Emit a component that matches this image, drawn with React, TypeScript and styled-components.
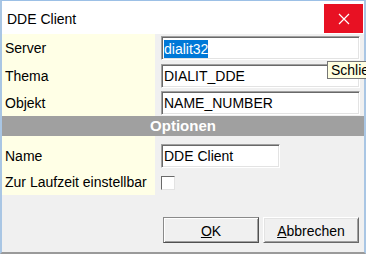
import React from 'react'
import styled, { createGlobalStyle } from 'styled-components'

const GlobalStyle = createGlobalStyle`
  html, body {
    margin: 0;
    padding: 0;
    overflow: hidden;
    background: #ffffff;
  }
  * {
    box-sizing: border-box;
  }
`

const font = `'Liberation Sans', Arial, sans-serif`

type Field = {
  label: string
  value: string
  selected?: boolean
}

const connection: Field[] = [
  { label: 'Server', value: 'dialit32', selected: true },
  { label: 'Thema', value: 'DIALIT_DDE' },
  { label: 'Objekt', value: 'NAME_NUMBER' },
]

export default function App() {
  return (
    <>
      <GlobalStyle />
      <Window>
        <TitleBar>
          <Title>DDE Client</Title>
          <CloseButton aria-label="Schließen">
            <svg width="12" height="12" viewBox="0 0 12 12">
              <path d="M1 1 L11 11 M11 1 L1 11" stroke="#ffffff" strokeWidth="1.2" fill="none" />
            </svg>
          </CloseButton>
        </TitleBar>

        <TopGrid>
          {connection.map((f) => (
            <React.Fragment key={f.label}>
              <Label>{f.label}</Label>
              <FieldCell>
                <TextBox>
                  {f.selected ? <Selection>{f.value}</Selection> : f.value}
                </TextBox>
              </FieldCell>
            </React.Fragment>
          ))}
        </TopGrid>

        <SectionHeader>Optionen</SectionHeader>

        <OptionsGrid>
          <Label>Name</Label>
          <FieldCell>
            <TextBox $width={119}>DDE Client</TextBox>
          </FieldCell>
          <Label>Zur Laufzeit einstellbar</Label>
          <FieldCell>
            <CheckBox />
          </FieldCell>
        </OptionsGrid>

        <ButtonBar>
          <DialogButton $default>
            <u>O</u>K
          </DialogButton>
          <DialogButton>
            <u>A</u>bbrechen
          </DialogButton>
        </ButtonBar>

        <Tooltip>Schließen</Tooltip>
      </Window>
    </>
  )
}

const Window = styled.div`
  position: relative;
  width: 366px;
  height: 254px;
  display: flex;
  flex-direction: column;
  background: #f0f0f0;
  border-top: 1px solid #9cc0e6;
  border-left: 2px solid #a9c6e4;
  border-right: 2px solid #a9c6e4;
  border-bottom: 2px solid #9a9a9a;
  font-family: ${font};
  font-size: 14px;
  color: #000000;
`

const TitleBar = styled.div`
  display: flex;
  justify-content: space-between;
  align-items: flex-start;
  height: 33px;
  background: #ffffff;
`

const Title = styled.div`
  padding: 10px 0 0 5px;
  line-height: 16px;
`

const CloseButton = styled.div`
  display: flex;
  align-items: center;
  justify-content: center;
  width: 39px;
  height: 29px;
  margin: 3px 1px 0 0;
  background: #e81123;
`

const TopGrid = styled.div`
  display: grid;
  grid-template-columns: 153px 1fr;
  grid-template-rows: 28px 27px 27px;
`

const Label = styled.div`
  display: flex;
  align-items: center;
  padding-left: 3px;
  background: #ffffe6;
  white-space: nowrap;
`

const FieldCell = styled.div`
  display: flex;
  align-items: center;
  padding: 0 4px 0 6px;
`

const TextBox = styled.div<{ $width?: number }>`
  display: flex;
  align-items: center;
  width: ${(p) => (p.$width ? `${p.$width}px` : '100%')};
  height: 24px;
  padding: 1px 0 0 2px;
  background: #ffffff;
  border-top: 1px solid #a0a0a0;
  border-left: 1px solid #a0a0a0;
  border-right: 1px solid #ffffff;
  border-bottom: 1px solid #ffffff;
  box-shadow: inset 1px 1px 0 #696969, inset -1px -1px 0 #e3e3e3;
  white-space: nowrap;
`

const Selection = styled.span`
  background: #0078d7;
  color: #ffffff;
  line-height: 18px;
`

const SectionHeader = styled.div`
  height: 20px;
  line-height: 20px;
  text-align: center;
  background: #a0a0a0;
  color: #ffffff;
  font-weight: bold;
  font-size: 15px;
`

const OptionsGrid = styled.div`
  display: grid;
  grid-template-columns: 153px 1fr;
  grid-template-rows: 27px 26px;
  padding-top: 6px;
  background: linear-gradient(to right, #ffffe6 153px, transparent 153px);
`

const CheckBox = styled.div`
  width: 14px;
  height: 14px;
  margin-top: 1px;
  background: #ffffff;
  border-top: 1px solid #696969;
  border-left: 1px solid #696969;
  border-right: 1px solid #e3e3e3;
  border-bottom: 1px solid #e3e3e3;
`

const ButtonBar = styled.div`
  display: flex;
  justify-content: flex-end;
  gap: 4px;
  padding: 22px 5px 0 0;
`

const DialogButton = styled.div<{ $default?: boolean }>`
  display: flex;
  align-items: center;
  justify-content: center;
  width: 96px;
  height: 26px;
  background: #f0f0f0;
  border: 1px solid;
  border-color: ${(p) =>
    p.$default ? '#8a8a8a #505050 #505050 #8a8a8a' : '#ffffff #696969 #696969 #ffffff'};
  box-shadow: ${(p) =>
    p.$default
      ? 'inset 1px 1px 0 #ffffff, inset -1px -1px 0 #a0a0a0'
      : 'inset 1px 1px 0 #e3e3e3, inset -1px -1px 0 #a0a0a0'};
  padding-top: 1px;
`

const Tooltip = styled.div`
  position: absolute;
  left: 325px;
  top: 60px;
  height: 18px;
  padding: 0 4px 0 3px;
  line-height: 16px;
  background: #ffffe1;
  border: 1px solid #767676;
  white-space: nowrap;
`
